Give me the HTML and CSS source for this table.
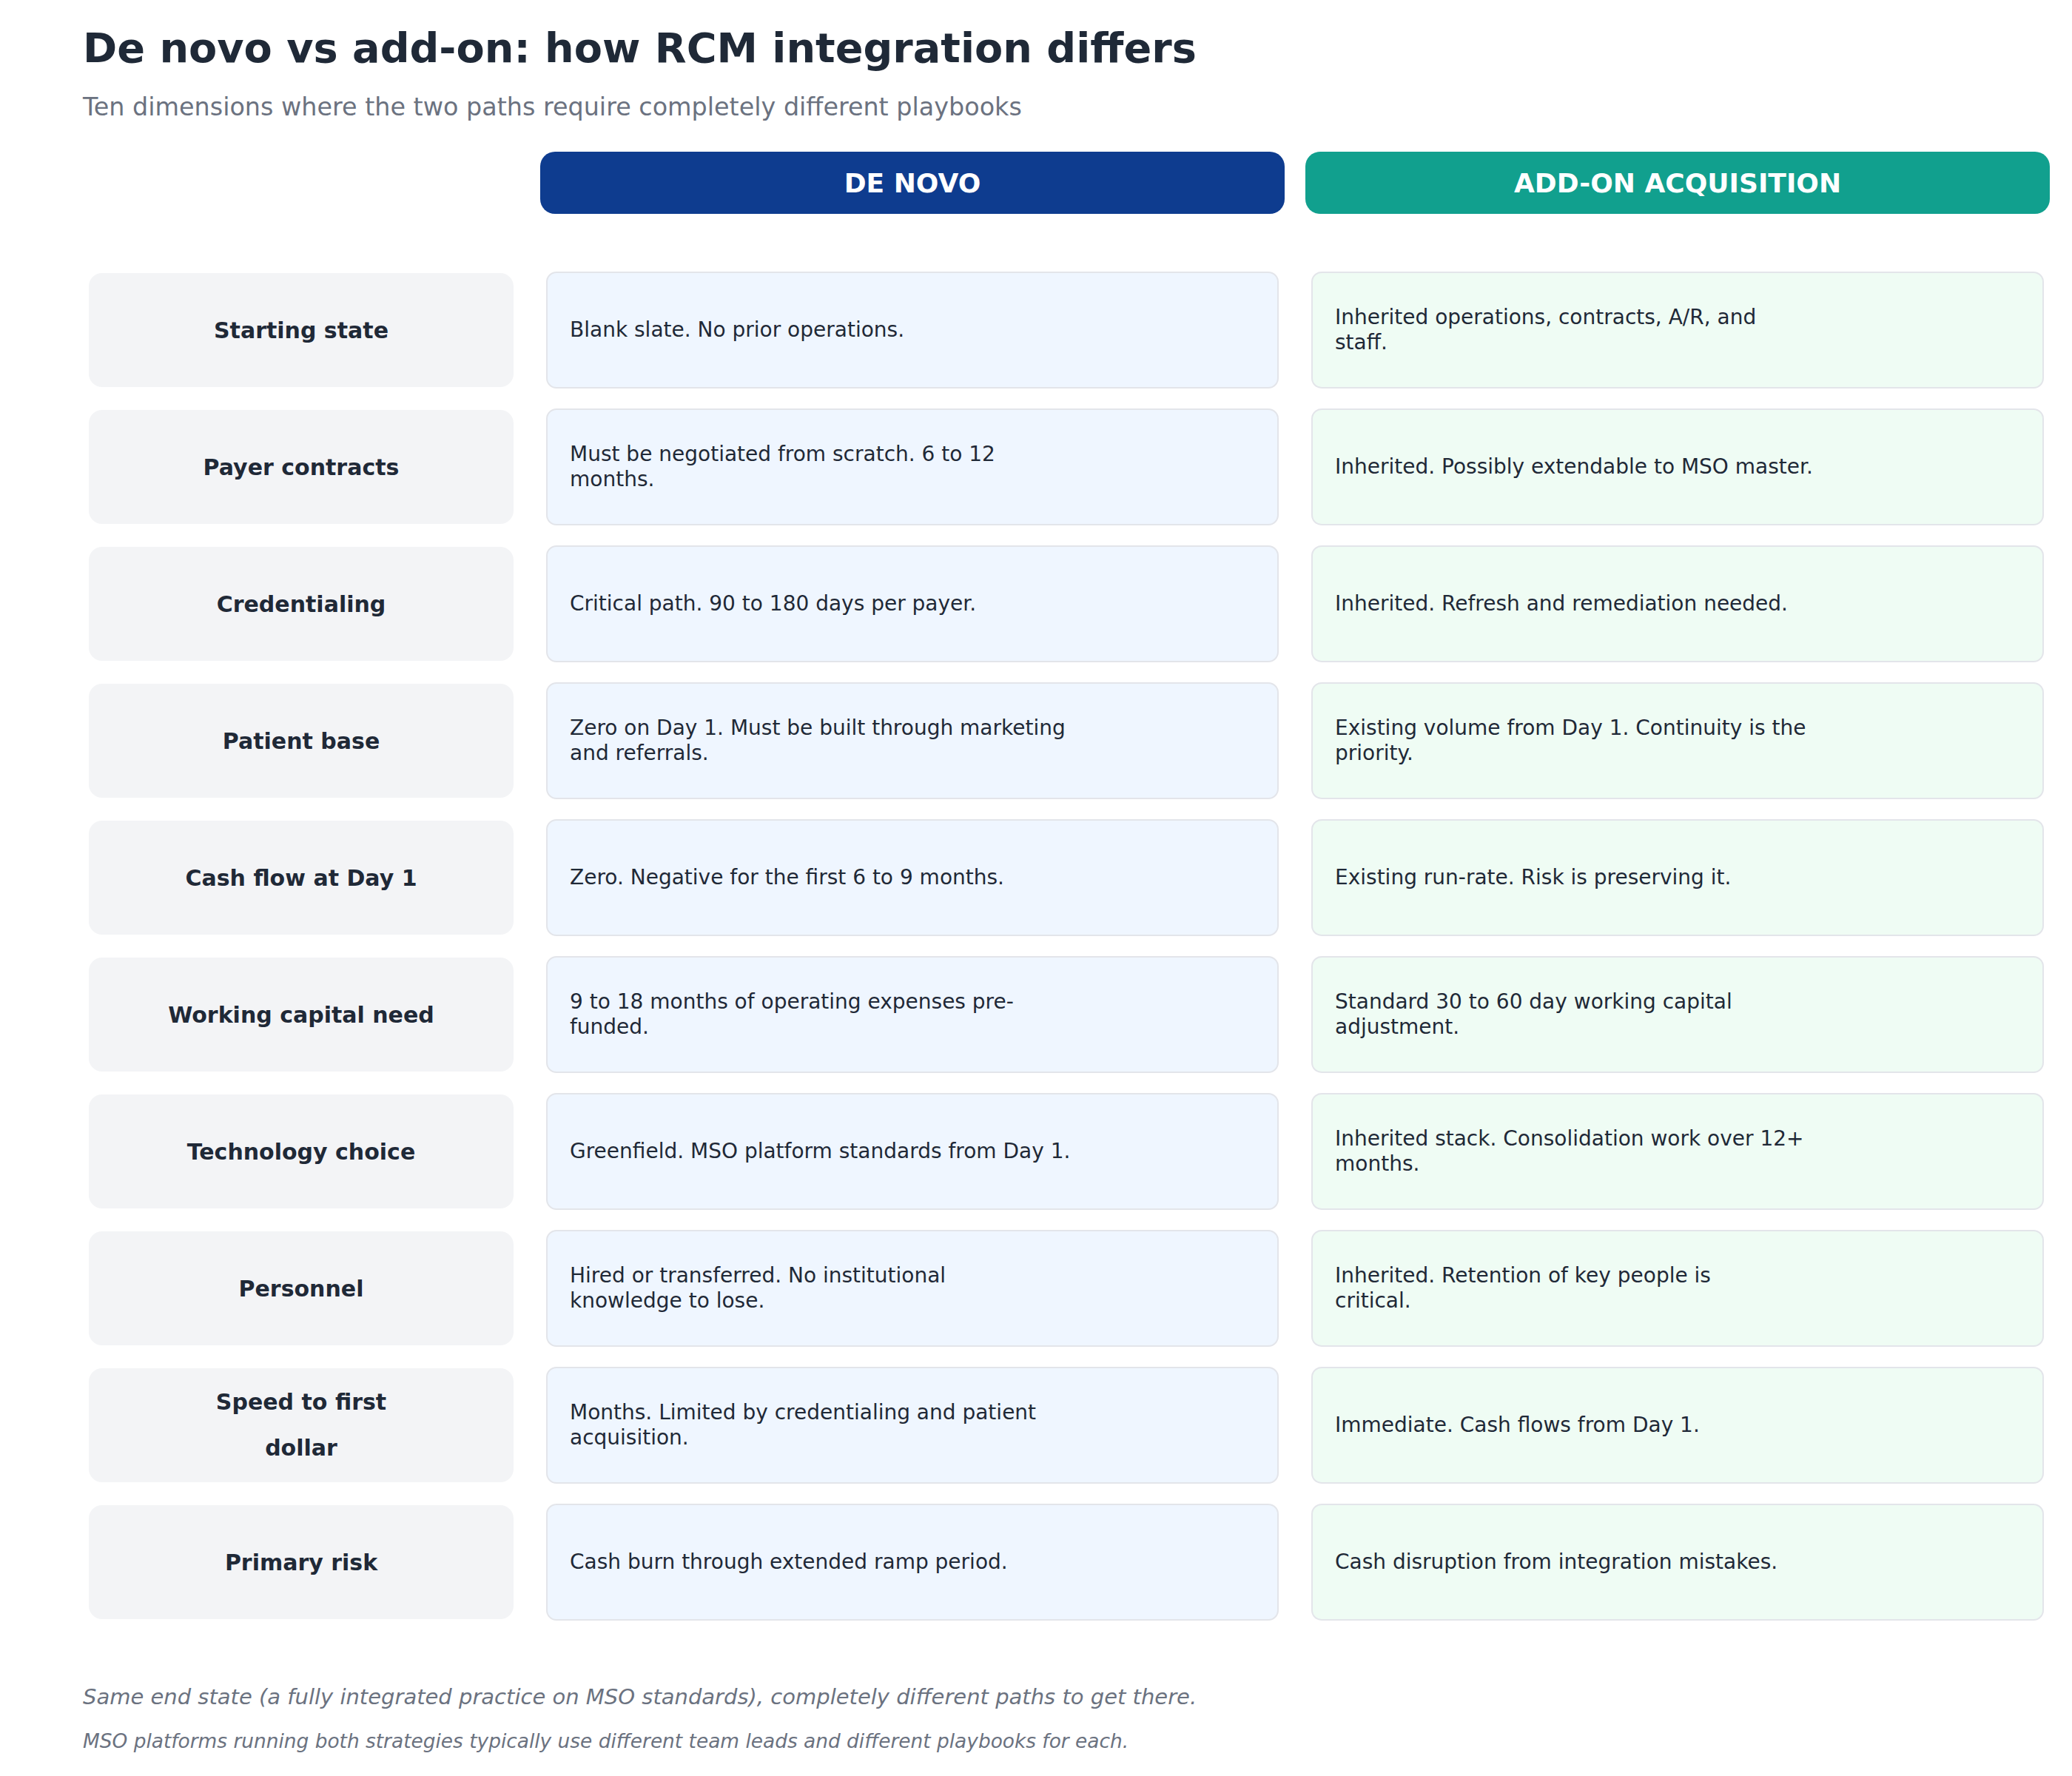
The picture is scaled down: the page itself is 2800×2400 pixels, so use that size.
FILE: index.html
```html
<!DOCTYPE html>
<html lang="en">
<head>
  <meta charset="UTF-8">
  <title>De novo vs add-on</title>
  <link rel="stylesheet" href="styles.css">
</head>
<body>
  <div class="page">
    <h1 class="page-title">De novo vs add-on: how RCM integration differs</h1>
    <p class="page-sub">Ten dimensions where the two paths require completely different playbooks</p>

    <div class="compare">
      <div class="head-spacer"></div>
      <div class="col-head head-denovo">DE NOVO</div>
      <div class="col-head head-addon">ADD-ON ACQUISITION</div>

      <div class="dim">Starting state</div>
      <div class="cell cell-denovo">Blank slate. No prior operations.</div>
      <div class="cell cell-addon">Inherited operations, contracts, A/R, and<br>staff.</div>

      <div class="dim">Payer contracts</div>
      <div class="cell cell-denovo">Must be negotiated from scratch. 6 to 12<br>months.</div>
      <div class="cell cell-addon">Inherited. Possibly extendable to MSO master.</div>

      <div class="dim">Credentialing</div>
      <div class="cell cell-denovo">Critical path. 90 to 180 days per payer.</div>
      <div class="cell cell-addon">Inherited. Refresh and remediation needed.</div>

      <div class="dim">Patient base</div>
      <div class="cell cell-denovo">Zero on Day 1. Must be built through marketing<br>and referrals.</div>
      <div class="cell cell-addon">Existing volume from Day 1. Continuity is the<br>priority.</div>

      <div class="dim">Cash flow at Day 1</div>
      <div class="cell cell-denovo">Zero. Negative for the first 6 to 9 months.</div>
      <div class="cell cell-addon">Existing run-rate. Risk is preserving it.</div>

      <div class="dim">Working capital need</div>
      <div class="cell cell-denovo">9 to 18 months of operating expenses pre-<br>funded.</div>
      <div class="cell cell-addon">Standard 30 to 60 day working capital<br>adjustment.</div>

      <div class="dim">Technology choice</div>
      <div class="cell cell-denovo">Greenfield. MSO platform standards from Day 1.</div>
      <div class="cell cell-addon">Inherited stack. Consolidation work over 12+<br>months.</div>

      <div class="dim">Personnel</div>
      <div class="cell cell-denovo">Hired or transferred. No institutional<br>knowledge to lose.</div>
      <div class="cell cell-addon">Inherited. Retention of key people is<br>critical.</div>

      <div class="dim dim-wrap">Speed to first<br>dollar</div>
      <div class="cell cell-denovo">Months. Limited by credentialing and patient<br>acquisition.</div>
      <div class="cell cell-addon">Immediate. Cash flows from Day 1.</div>

      <div class="dim">Primary risk</div>
      <div class="cell cell-denovo">Cash burn through extended ramp period.</div>
      <div class="cell cell-addon">Cash disruption from integration mistakes.</div>
    </div>

    <p class="note">Same end state (a fully integrated practice on MSO standards), completely different paths to get there.</p>
    <p class="note-small">MSO platforms running both strategies typically use different team leads and different playbooks for each.</p>
  </div>
</body>
</html>
```

FILE: styles.css
```css
* {
  margin: 0;
  padding: 0;
  box-sizing: border-box;
}

body {
  font-family: "DejaVu Sans", "Liberation Sans", sans-serif;
  color: #1f2937;
  background: #ffffff;
}

.page {
  width: 2800px;
  padding: 30px 0 0 112px;
}

.page-title {
  font-size: 55.7px;
  font-weight: bold;
  line-height: 70px;
  color: #1f2937;
}

.page-sub {
  margin-top: 26px;
  font-size: 33.4px;
  line-height: 38px;
  color: #6b7280;
}

.compare {
  display: grid;
  grid-template-columns: 590px 1006px 1006px;
  grid-template-rows: 135px;
  grid-auto-rows: 158px;
  column-gap: 28px;
  row-gap: 27px;
  margin-top: 41px;
}

.col-head {
  align-self: start;
  height: 84px;
  border-radius: 20px;
  display: flex;
  align-items: center;
  justify-content: center;
  color: #ffffff;
  font-size: 36px;
  font-weight: bold;
}

.head-denovo {
  background: #0e3c8f;
}

.head-addon {
  background: #11a08e;
}

.dim {
  margin: 2px 8px;
  background: #f3f4f6;
  border-radius: 18px;
  display: flex;
  align-items: center;
  justify-content: center;
  text-align: center;
  font-size: 30px;
  font-weight: bold;
  color: #1f2937;
}

.dim-wrap {
  line-height: 62px;
}

.cell {
  margin: 0 8px;
  border: 2px solid #e3e5ea;
  border-radius: 14px;
  display: flex;
  align-items: center;
  padding-left: 30px;
  font-size: 28px;
  line-height: 34px;
  color: #1f2937;
}

.cell-denovo {
  background: #eff6ff;
}

.cell-addon {
  background: #effcf4;
}

.note {
  margin-top: 86px;
  font-size: 29px;
  line-height: 34px;
  font-style: italic;
  color: #6b7280;
}

.note-small {
  margin-top: 28px;
  font-size: 26.4px;
  line-height: 30px;
  font-style: italic;
  color: #6b7280;
}
```
